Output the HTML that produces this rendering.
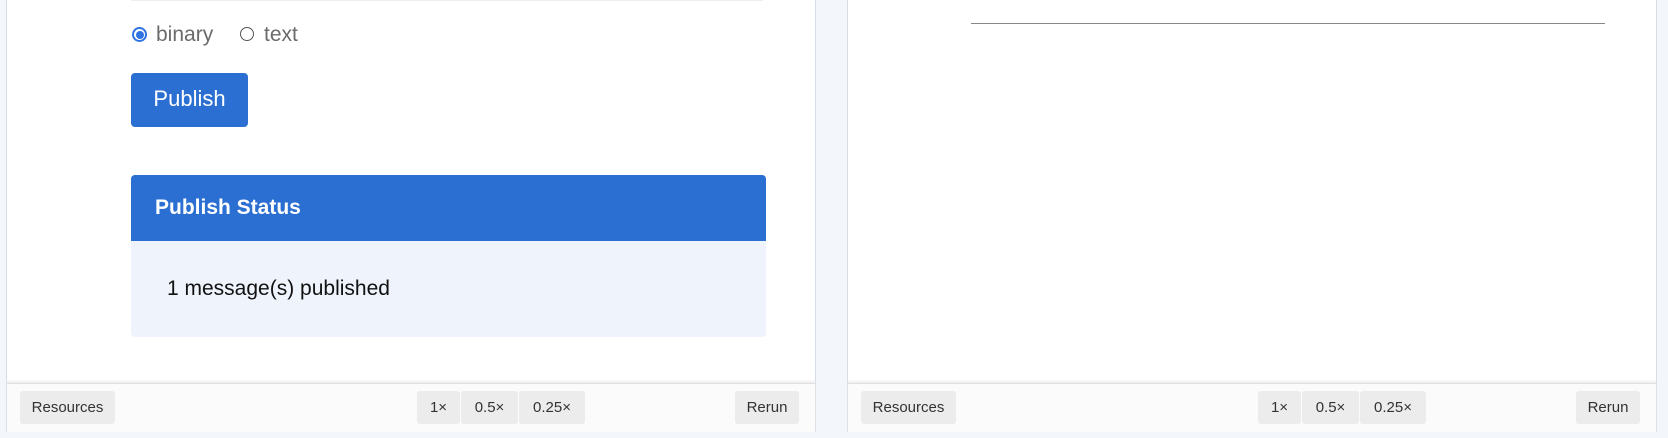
<!DOCTYPE html>
<html><head><style>
body{margin:0;width:1668px;height:438px;background:#f3f7fb;font-family:"Liberation Sans",sans-serif;position:relative;overflow:hidden}
.panel{position:absolute;top:-2px;width:808px;height:432px;background:#fff;border:1px solid #d6dde4}
.foot{position:absolute;left:0;right:0;top:384px;height:48px;background:#fbfbfb;border-top:1px solid #e2e2e2;box-shadow:0 -2px 2px #eee}
.b{position:absolute;top:7px;height:33px;line-height:33px;background:#ececec;border-radius:3px;font-size:15px;color:#333;text-align:center}
.abs{position:absolute}
</style></head><body>
<div class="panel" style="left:6px">
 <div class="abs" style="left:124px;top:0;width:632px;height:2px;background:#eee"></div>
 <div class="abs" style="left:125px;top:28px;width:11px;height:11px;border-radius:50%;border:2px solid #2f74e0;background:#fff"></div>
 <div class="abs" style="left:128.5px;top:31.5px;width:8px;height:8px;border-radius:50%;background:#2f74e0"></div>
 <div class="abs" style="left:149px;top:24px;font-size:21px;color:#6b6b6b">binary</div>
 <div class="abs" style="left:233px;top:28px;width:12px;height:12px;border-radius:50%;border:1.5px solid #555"></div>
 <div class="abs" style="left:257px;top:24px;font-size:21px;color:#6b6b6b">text</div>
 <div class="abs" style="left:124px;top:74px;width:117px;height:54px;background:#2b6fd3;border-radius:4px;color:#fff;font-size:22px;line-height:52px;text-align:center">Publish</div>
 <div class="abs" style="left:124px;top:176px;width:635px;height:162px;background:#eff3fb;border-radius:4px;overflow:hidden">
  <div style="height:66px;background:#2b6fd3;color:#fff;font-weight:bold;font-size:21px;line-height:66px;padding-left:24px">Publish Status</div>
  <div style="padding-left:36px;font-size:21px;line-height:96px;color:#111">1 message(s) published</div>
 </div>
 <div class="foot">
  <div class="b" style="left:13px;width:95px">Resources</div>
  <div class="b" style="left:410px;width:43px">1×</div>
  <div class="b" style="left:454px;width:57px">0.5×</div>
  <div class="b" style="left:512px;width:66px">0.25×</div>
  <div class="b" style="left:728px;width:64px">Rerun</div>
 </div>
</div>
<div class="panel" style="left:847px">
 <div class="abs" style="left:123px;top:24px;width:634px;height:1px;background:#888"></div>
 <div class="foot">
  <div class="b" style="left:13px;width:95px">Resources</div>
  <div class="b" style="left:410px;width:43px">1×</div>
  <div class="b" style="left:454px;width:57px">0.5×</div>
  <div class="b" style="left:512px;width:66px">0.25×</div>
  <div class="b" style="left:728px;width:64px">Rerun</div>
 </div>
</div>
</body></html>
